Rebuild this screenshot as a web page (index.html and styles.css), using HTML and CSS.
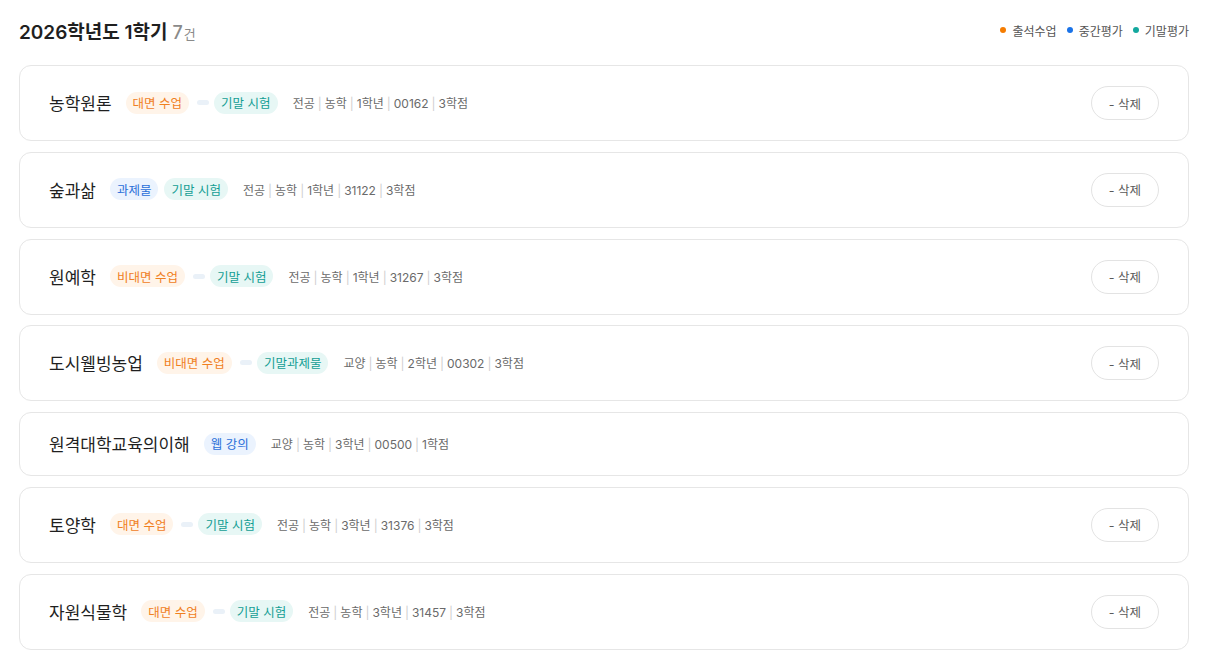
FILE: index.html
```html
<!DOCTYPE html>
<html lang="ko">
<head>
<meta charset="utf-8">
<title>2026학년도 1학기</title>
<link rel="stylesheet" href="styles.css">
</head>
<body>
<div class="page">
  <header class="head">
    <h1 class="title">2026학년도 1학기 <span class="count">7<small>건</small></span></h1>
    <ul class="legend">
      <li><i class="dot dot-orange"></i>출석수업</li>
      <li><i class="dot dot-blue"></i>중간평가</li>
      <li><i class="dot dot-teal"></i>기말평가</li>
    </ul>
  </header>
  <div class="list">
    <div class="card">
      <div class="info">
        <span class="name">농학원론</span>
        <span class="badges"><span class="badge orange">대면 수업</span><span class="link"></span><span class="badge teal">기말 시험</span></span>
        <span class="meta">전공<b>|</b>농학<b>|</b>1학년<b>|</b>00162<b>|</b>3학점</span>
      </div>
      <button class="del">- 삭제</button>
    </div>
    <div class="card">
      <div class="info">
        <span class="name">숲과삶</span>
        <span class="badges gap"><span class="badge blue">과제물</span><span class="badge teal">기말 시험</span></span>
        <span class="meta">전공<b>|</b>농학<b>|</b>1학년<b>|</b>31122<b>|</b>3학점</span>
      </div>
      <button class="del">- 삭제</button>
    </div>
    <div class="card">
      <div class="info">
        <span class="name">원예학</span>
        <span class="badges"><span class="badge orange">비대면 수업</span><span class="link"></span><span class="badge teal">기말 시험</span></span>
        <span class="meta">전공<b>|</b>농학<b>|</b>1학년<b>|</b>31267<b>|</b>3학점</span>
      </div>
      <button class="del">- 삭제</button>
    </div>
    <div class="card">
      <div class="info">
        <span class="name">도시웰빙농업</span>
        <span class="badges"><span class="badge orange">비대면 수업</span><span class="link"></span><span class="badge teal">기말과제물</span></span>
        <span class="meta">교양<b>|</b>농학<b>|</b>2학년<b>|</b>00302<b>|</b>3학점</span>
      </div>
      <button class="del">- 삭제</button>
    </div>
    <div class="card">
      <div class="info">
        <span class="name">원격대학교육의이해</span>
        <span class="badges"><span class="badge blue">웹 강의</span></span>
        <span class="meta">교양<b>|</b>농학<b>|</b>3학년<b>|</b>00500<b>|</b>1학점</span>
      </div>
    </div>
    <div class="card">
      <div class="info">
        <span class="name">토양학</span>
        <span class="badges"><span class="badge orange">대면 수업</span><span class="link"></span><span class="badge teal">기말 시험</span></span>
        <span class="meta">전공<b>|</b>농학<b>|</b>3학년<b>|</b>31376<b>|</b>3학점</span>
      </div>
      <button class="del">- 삭제</button>
    </div>
    <div class="card">
      <div class="info">
        <span class="name">자원식물학</span>
        <span class="badges"><span class="badge orange">대면 수업</span><span class="link"></span><span class="badge teal">기말 시험</span></span>
        <span class="meta">전공<b>|</b>농학<b>|</b>3학년<b>|</b>31457<b>|</b>3학점</span>
      </div>
      <button class="del">- 삭제</button>
    </div>
  </div>
</div>
</body>
</html>
```

FILE: styles.css
```css
* { box-sizing: border-box; }
html, body { margin: 0; padding: 0; background: #fff; }
body {
  font-family: "Inter", "Noto Sans CJK KR", sans-serif;
  color: #222;
}
.page {
  padding: 15px 21px 0 19px;
}
.head {
  display: flex;
  align-items: center;
  justify-content: space-between;
  height: 30px;
  margin-bottom: 20px;
}
.title {
  margin: 0;
  font-size: 19px;
  font-weight: 600;
  color: #1f1f1f;
}
.count {
  font-size: 18px;
  font-weight: 500;
  color: #8a8a8a;
}
.count small {
  font-size: 13px;
  font-weight: 400;
  margin-left: 1px;
}
.legend {
  list-style: none;
  margin: 0;
  padding: 0;
  display: flex;
  gap: 10px;
  font-size: 12px;
  color: #555;
}
.legend li { display: flex; align-items: center; }
.dot {
  width: 6px;
  height: 6px;
  border-radius: 50%;
  margin-right: 6px;
}
.dot-orange { background: #f57c00; }
.dot-blue { background: #1a73e8; }
.dot-teal { background: #13a89e; }
.list {
  display: flex;
  flex-direction: column;
  gap: 10.75px;
}
.card {
  display: flex;
  align-items: center;
  justify-content: space-between;
  border: 1px solid #e6e6e6;
  border-radius: 12px;
  padding: 20px 29px 20px 29px;
  min-height: 64px;
}
.info {
  display: flex;
  align-items: center;
  height: 22px;
  margin-top: -1px;
}
.name {
  font-size: 17px;
  font-weight: 400;
  color: #1f1f1f;
  margin-right: 14px;
}
.badges {
  display: flex;
  align-items: center;
  margin-right: 15px;
}
.badges.gap { gap: 6px; }
.badge {
  display: inline-flex;
  align-items: center;
  height: 22px;
  padding: 0 7px;
  border-radius: 11px;
  font-size: 12.5px;
  white-space: nowrap;
}
.badge.orange { background: #fff4e9; color: #f0801e; }
.badge.teal { background: #e7f7f5; color: #139e94; }
.badge.blue { background: #ebf3fe; color: #2a6fd9; }
.link {
  width: 12px;
  height: 5px;
  border-radius: 3px;
  background: #eaf1f8;
  margin: 0 5px 0 8px;
}
.meta {
  font-size: 12px;
  color: #6a6a6a;
  white-space: nowrap;
}
.meta b {
  font-weight: 400;
  color: #cfcfcf;
  margin: 0 3px;
}
.del {
  height: 34px;
  width: 68px;
  border: 1px solid #e3e3e3;
  border-radius: 17px;
  background: #fff;
  font-family: inherit;
  font-size: 12.5px;
  color: #5a5a5a;
  padding: 0;
  cursor: pointer;
}
```
